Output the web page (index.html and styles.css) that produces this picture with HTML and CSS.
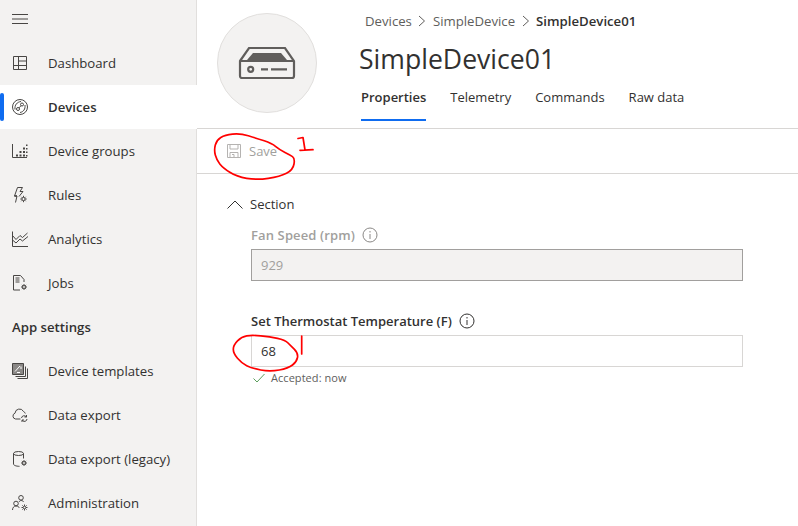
FILE: index.html
```html
<!DOCTYPE html>
<html lang="en">
<head>
<meta charset="utf-8">
<title>SimpleDevice01</title>
<link rel="stylesheet" href="styles.css">
</head>
<body>
<div class="app">
  <aside class="sidebar">
    <div class="burger-row">
      <svg class="icon burger" width="16" height="10" viewBox="0 0 16 10"><path d="M0 .5h16M0 5h16M0 9.500h16"/></svg>
    </div>
    <nav>
      <a class="nav-item"><svg class="icon" width="16" height="16" viewBox="0 0 16 16"><path d="M1.500 1.500h13v13h-13zM1.500 10.500h13M6.500 1.500v13M6.500 6h8"/></svg><span>Dashboard</span></a>
      <a class="nav-item active"><svg class="icon" width="16" height="16" viewBox="0 0 16 16"><circle cx="8" cy="8" r="7.500"/><circle cx="6" cy="10" r="1.500"/><circle cx="10" cy="5.500" r="1.500"/><path d="M7 8.900 9 6.700M3 10.500C2.500 6 5 3 9 2.500M13 6c.5 4-1.500 7-5 7.500"/></svg><span>Devices</span></a>
      <a class="nav-item"><svg class="icon" width="16" height="16" viewBox="0 0 16 16"><path d="M.5 1v13.500H15"/><path class="dots" d="M4 11.500h2v2H4zM7.500 11.500h2v2h-2zM11 11.500h2v2h-2zM7.500 8h2v2h-2zM11 8h2v2h-2zM11 4.500h2v2h-2zM14 1.500h1.500V3H14zM14 5h1.500v1.500H14zM14 8.500h1.500V10H14zM14 12h1.500v1.500H14z"/></svg><span>Device groups</span></a>
      <a class="nav-item"><svg class="icon" width="16" height="16" viewBox="0 0 16 16"><path d="M5.500.5h5L8 4.500h3L7 9.500M5 9H2.500zM5.500.5 2.500 9H5l-1.500 6.500"/><circle cx="11.500" cy="12" r="1.600"/><path d="M11.500 8.800v1.500M11.500 13.700v1.500M8.300 12h1.500M13.200 12h1.500M9.300 9.800l1 1M12.700 13.200l1 1M13.700 9.800l-1 1M10.300 13.200l-1 1"/></svg><span>Rules</span></a>
      <a class="nav-item"><svg class="icon" width="16" height="16" viewBox="0 0 16 16"><path d="M.5.500v15H16M.500 9l3.500 3 4-4 2.500 2L16 5.500M.500 4.500 4 8.500l4-4 2.500 2L15.500 2"/></svg><span>Analytics</span></a>
      <a class="nav-item"><svg class="icon" width="16" height="16" viewBox="0 0 16 16"><path d="M8 15H1.500V.5h7l3.500 4v2.500"/><path d="M3.500 3h4M3.500 5h4M3.500 7h4"/><circle cx="12" cy="12" r="1.500"/><path d="M12 9v1.200M12 13.800V15M9 12h1.200M13.800 12H15M9.900 9.900l.9.9M13.200 13.200l.9.900M14.100 9.900l-.9.9M10.800 13.200l-.9.900"/></svg><span>Jobs</span></a>
      <div class="nav-item heading">App settings</div>
      <a class="nav-item"><svg class="icon" width="16" height="16" viewBox="0 0 16 16"><path class="solid" d="M.5.500h11v11H.5z"/><path d="M13.500 3.500v10h-10M15.500 5.500v10h-10"/><path class="inv" d="M3 8.500 8 3M5 9.500h3M9 6V3.500"/></svg><span>Device templates</span></a>
      <a class="nav-item"><svg class="icon" width="16" height="16" viewBox="0 0 16 16"><path d="M8.500 12H3.500A3 3 0 0 1 3 6.200 4.500 4.500 0 0 1 11.500 4.500c.8.300 1.500 1 1.800 2"/><path d="M9.500 11a2.600 2.600 0 0 1 4.800-1M15 12a2.600 2.600 0 0 1-4.800 1.200M14.500 8v2h-2M10 15v-2h2"/></svg><span>Data export</span></a>
      <a class="nav-item"><svg class="icon" width="16" height="16" viewBox="0 0 16 16"><ellipse cx="6.500" cy="2.500" rx="5" ry="2"/><path d="M1.500 2.500v10.500c0 1.300 2.500 2.300 6 2.300M11.500 2.500v5"/><circle cx="12" cy="12" r="1.500"/><path d="M12 9v1.200M12 13.800V15M9 12h1.200M13.800 12H15M9.900 9.900l.9.9M13.200 13.200l.9.900M14.100 9.900l-.9.9M10.800 13.200l-.9.900"/></svg><span>Data export (legacy)</span></a>
      <a class="nav-item"><svg class="icon" width="16" height="16" viewBox="0 0 16 16"><circle cx="9" cy="2.800" r="2.300"/><circle cx="4" cy="8.500" r="2.300"/><path d="M.5 15c0-2.500 1.500-4 3.500-4s3 1 3.300 2M7 7c.6-1 1.300-1.500 2-1.500 1.200 0 2 .4 2.700 1.500"/><circle cx="12.500" cy="12.500" r="1.300"/><path d="M12.500 9.500v1.500M12.500 14v1.500M9.500 12.500H11M14 12.500h1.500M10.400 10.400l1 1M13.600 13.600l1 1M14.600 10.400l-1 1M11.400 13.600l-1 1"/></svg><span>Administration</span></a>
    </nav>
  </aside>
  <main class="main">
    <header class="header">
      <div class="avatar">
        <svg class="device" width="58" height="34" viewBox="0 0 58 34"><path d="M2 15 11 2h36l9 13v15a2 2 0 0 1-2 2H4a2 2 0 0 1-2-2zM2 15h54"/><path class="fill" d="M9 14 15 7h28l6 7z"/><circle cx="12.700" cy="23.300" r="2.500"/><path d="M23 23.300h7M33 23.300h16"/></svg>
      </div>
      <div class="title-block">
        <div class="crumbs">
          <span>Devices</span><svg class="sep" width="8" height="12" viewBox="0 0 8 12"><path d="M1 1l5.500 5L1 11"/></svg>
          <span>SimpleDevice</span><svg class="sep" width="8" height="12" viewBox="0 0 8 12"><path d="M1 1l5.500 5L1 11"/></svg>
          <strong>SimpleDevice01</strong>
        </div>
        <h1>SimpleDevice01</h1>
        <div class="tabs">
          <a class="tab selected">Properties</a>
          <a class="tab">Telemetry</a>
          <a class="tab">Commands</a>
          <a class="tab">Raw data</a>
        </div>
      </div>
    </header>
    <div class="toolbar">
      <svg class="save-icon" width="14" height="14" viewBox="0 0 14 14"><path d="M.5.500h13v13H.5zM3 .5v4.500h8V.5M3 13.500V8.500h8v5M5 10.500h2v3"/></svg>
      <span>Save</span>
    </div>
    <section class="content">
      <div class="section-head">
        <svg width="16" height="9" viewBox="0 0 16 9"><path d="M.5 8.500 8 1l7.500 7.500"/></svg>
        <span>Section</span>
      </div>
      <div class="fields">
        <div class="field disabled">
          <label>Fan Speed (rpm)<svg class="info" width="16" height="16" viewBox="0 0 16 16"><circle cx="8" cy="8" r="7"/><path d="M8 7v5M8 4v1.500"/></svg></label>
          <div class="input">929</div>
        </div>
        <div class="field">
          <label>Set Thermostat Temperature (F)<svg class="info" width="16" height="16" viewBox="0 0 16 16"><circle cx="8" cy="8" r="7"/><path d="M8 7v5M8 4v1.500"/></svg></label>
          <div class="input">68</div>
          <div class="status"><svg width="12" height="10" viewBox="0 0 12 10"><path d="M.5 5.500 4 9l7.500-8"/></svg><span>Accepted: now</span></div>
        </div>
      </div>
    </section>
    <svg class="ink" width="601" height="526" viewBox="197 0 601 526">
      <path d="M215.300 145Q216.700 140 220.800 137.500Q225 135 232.500 134.200Q240 133.300 248.300 135.800Q256.700 138.300 264.200 140.800Q271.700 143.300 275.800 146.600Q280 150 285 152.500Q290 155 292.500 156.600Q295 158.300 294 164Q293 170 286.500 173.300Q280 176.700 268.300 178.300Q256.700 180 246.700 178.300Q236.700 176.700 229.800 172.300Q223 168 219.800 164Q216.700 160 215.300 155Q214 150 215.300 145"/>
      <path d="M298 138.500 303 137.500 305 150M300 150.300 313 149.700"/>
      <path d="M237.500 340.800Q233.300 345 233.300 349.200Q233.300 353.300 237.500 358.300Q241.700 363.300 246.700 365.800Q251.700 368.300 260.800 370Q270 371.700 279.200 370Q288.300 368.300 292.500 365Q296.700 361.700 297.500 357.500Q298.300 353.300 294.200 349.200Q290 345 287.500 342.500Q285 340 277.500 338.300Q270 336.700 260.800 335.800Q251.700 335 246.700 335.800Q241.700 336.700 237.500 340.800"/>
      <path d="M301.700 336V354"/>
    </svg>
  </main>
</div>
</body>
</html>
```
FILE: styles.css
```css
* { box-sizing: border-box; }
html, body { margin: 0; height: 100%; }
body { font-family: "Open Sans", "Noto Sans", sans-serif; font-size: 13px; color: #323130; background: #fff; overflow: hidden; }
svg { display: block; flex: none; }
.app { display: flex; height: 526px; }
.sidebar { width: 197px; flex: none; background: #f3f2f1; border-right: 1px solid #e1dfdd; font-size: 13.200px; }
.icon { fill: none; stroke: #484644; stroke-width: 1; }
.burger-row { height: 41px; padding: 14px 0 0 12px; }
.nav-item { display: flex; align-items: center; height: 44px; position: relative; }
.nav-item .icon { position: absolute; left: 12px; top: 50%; transform: translateY(-50%); }
.nav-item span { margin-left: 48px; }
.nav-item .dots { fill: #484644; stroke: none; }
.nav-item .solid { fill: #8a8886; }
.nav-item .inv { stroke: #fff; }
.active { background: #fff; font-weight: 600; margin-right: -1px; }
.active::before { content: ""; position: absolute; left: 0; top: 8px; bottom: 8px; width: 4px; background: #0f6cf0; border-radius: 2px; }
.heading { padding-left: 12px; font-weight: 600; }
.main { flex: 1; position: relative; min-width: 0; }
.header { height: 129px; display: flex; border-bottom: 1px solid #d8d6d4; padding: 13px 0 0 20px; }
.avatar { width: 100px; height: 100px; border-radius: 50%; background: #f3f2f1; border: 1px solid #e1dfdd; display: flex; align-items: center; justify-content: center; }
.device { fill: none; stroke: #605e5c; stroke-width: 2.200; }
.device .fill { fill: #605e5c; stroke: none; }
.title-block { margin-left: 42px; }
.crumbs { display: flex; align-items: center; height: 16px; margin: 0 0 0 6px; gap: 6.500px; color: #605e5c; font-size: 13.200px; }
.crumbs strong { font-weight: 600; color: #323130; }
.sep { fill: none; stroke: #605e5c; stroke-width: 1; }
h1 { margin: 6px 0 0; font-size: 26.600px; line-height: 48px; font-weight: 400; color: #323130; }
.tabs { display: flex; gap: 24px; margin: 1px 0 0 2px; }
.tab { height: 37px; padding-top: 1px; line-height: 24px; color: #323130; }
.selected { font-weight: 600; border-bottom: 2px solid #0f6cf0; }
.toolbar { height: 45px; display: flex; align-items: center; gap: 8px; padding-left: 30px; border-bottom: 1px solid #d8d6d4; color: #a19f9d; }
.save-icon { fill: none; stroke: #b5b3b1; stroke-width: 1; }
.content { padding: 21px 0 0 30px; }
.section-head { display: flex; align-items: center; gap: 7px; height: 18px; }
.section-head svg { fill: none; stroke: #323130; stroke-width: 1; }
.fields { margin: 13px 0 0 24px; width: 492px; display: flex; flex-direction: column; gap: 31px; }
label { display: flex; align-items: center; gap: 7px; height: 18px; font-weight: 600; }
.disabled label { letter-spacing: .13px; }
.info { fill: none; stroke: #323130; stroke-width: 1; }
.input { height: 32px; margin-top: 5px; padding: 0 9px; line-height: 30px; border: 1px solid #d8d6d4; background: #fff; }
.disabled label { color: #a19f9d; }
.disabled .info { stroke: #8a8886; }
.disabled .input { background: #f3f2f1; border-color: #a19f9d; color: #a19f9d; }
.status { display: flex; align-items: center; gap: 6px; height: 21px; padding-left: 2px; font-size: 11px; letter-spacing: .05px; color: #605e5c; }
.status svg { fill: none; stroke: #5a9e5c; stroke-width: 1; }
.ink { position: absolute; left: 0; top: 0; fill: none; stroke: #f00; stroke-width: 1.700; stroke-linejoin: round; stroke-linecap: round; pointer-events: none; }
```
